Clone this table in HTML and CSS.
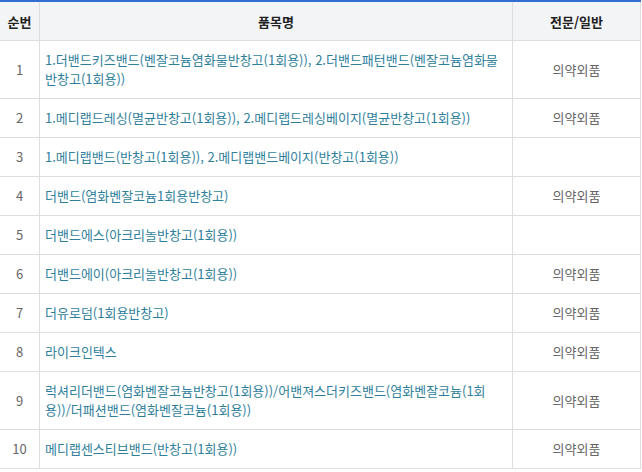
FILE: index.html
```html
<!DOCTYPE html>
<html lang="ko">
<head>
<meta charset="utf-8">
<link rel="stylesheet" href="styles.css">
</head>
<body>
<table class="list">
  <colgroup>
    <col class="c-no">
    <col class="c-name">
    <col class="c-type">
  </colgroup>
  <thead>
    <tr><th>순번</th><th>품목명</th><th>전문/일반</th></tr>
  </thead>
  <tbody>
    <tr><td class="no">1</td><td class="name">1.더밴드키즈밴드(벤잘코늄염화물반창고(1회용)), 2.더밴드패턴밴드(벤잘코늄염화물반창고(1회용))</td><td class="type">의약외품</td></tr>
    <tr><td class="no">2</td><td class="name">1.메디랩드레싱(멸균반창고(1회용)), 2.메디랩드레싱베이지(멸균반창고(1회용))</td><td class="type">의약외품</td></tr>
    <tr><td class="no">3</td><td class="name">1.메디랩밴드(반창고(1회용)), 2.메디랩밴드베이지(반창고(1회용))</td><td class="type"></td></tr>
    <tr><td class="no">4</td><td class="name">더밴드(염화벤잘코늄1회용반창고)</td><td class="type">의약외품</td></tr>
    <tr><td class="no">5</td><td class="name">더밴드에스(아크리놀반창고(1회용))</td><td class="type"></td></tr>
    <tr><td class="no">6</td><td class="name">더밴드에이(아크리놀반창고(1회용))</td><td class="type">의약외품</td></tr>
    <tr><td class="no">7</td><td class="name">더유로덤(1회용반창고)</td><td class="type">의약외품</td></tr>
    <tr><td class="no">8</td><td class="name">라이크인텍스</td><td class="type">의약외품</td></tr>
    <tr><td class="no">9</td><td class="name">럭셔리더밴드(염화벤잘코늄반창고(1회용))/어밴져스더키즈밴드(염화벤잘코늄(1회용))/더패션밴드(염화벤잘코늄(1회용))</td><td class="type">의약외품</td></tr>
    <tr><td class="no">10</td><td class="name">메디랩센스티브밴드(반창고(1회용))</td><td class="type">의약외품</td></tr>
  </tbody>
</table>
</body>
</html>
```
FILE: styles.css
```css
html, body {
  margin: 0;
  padding: 0;
  background: #fff;
}
body {
  font-family: "Noto Sans CJK KR", "Noto Sans", sans-serif;
  font-size: 13px;
}
.list {
  width: 641px;
  table-layout: fixed;
  border-collapse: separate;
  border-spacing: 0;
  border-top: 2px solid #2e6fcf;
}
.c-no { width: 40px; }
.c-name { width: 473px; }
.c-type { width: 128px; }
.list th,
.list td {
  box-sizing: border-box;
  border-right: 1px solid #dedede;
  border-bottom: 1px solid #dedede;
  line-height: 19px;
  padding: 9px 5px 10px;
}
.list th {
  background: #f3f4f6;
  color: #222;
  font-weight: bold;
  text-align: center;
  padding: 10px 0 9px;
}
.list td.no,
.list td.type {
  text-align: center;
  color: #666;
  padding-left: 0;
  padding-right: 0;
}
.list td.name {
  color: #2f7f9c;
  word-break: break-all;
}
```
